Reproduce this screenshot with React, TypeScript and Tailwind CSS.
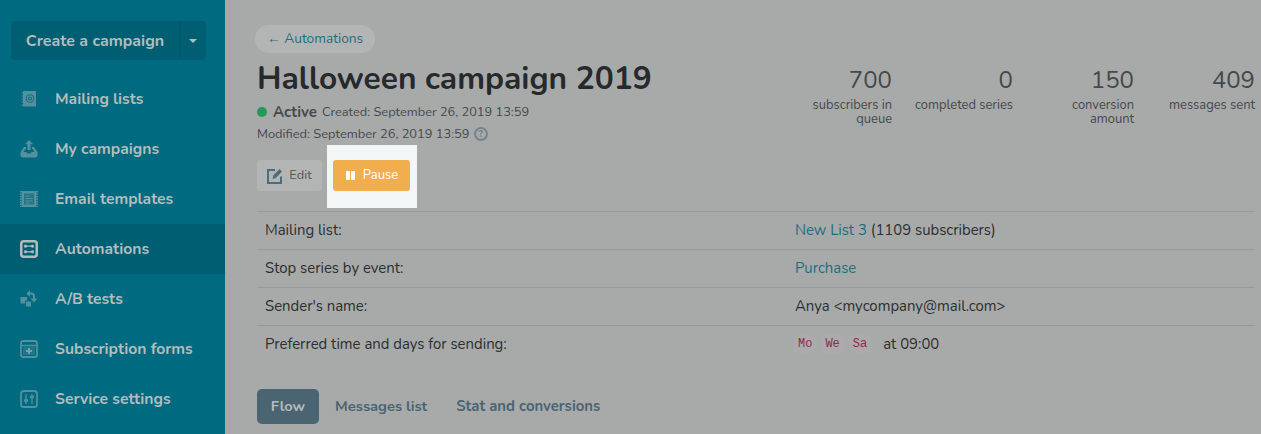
import React from 'react';

const font = "font-['Nunito','Noto_Sans',sans-serif]";
const iconColor = '#55909f';

function MailIcon() {
  return (
    <svg width="18" height="18" viewBox="0 0 18 18">
      <rect x="3" y="1" width="13" height="15.500" rx="0.500" fill={iconColor} />
      <path d="M1.500 3h3M1.500 6h3M1.500 9h3M1.500 12h3M1.500 15h3" stroke={iconColor} strokeWidth="1.200" />
      <circle cx="10" cy="8.500" r="3.800" fill="none" stroke="#156f82" strokeWidth="1.100" />
      <circle cx="10" cy="8.500" r="1.500" fill="none" stroke="#156f82" strokeWidth="1.100" />
    </svg>
  );
}

function UploadIcon() {
  return (
    <svg width="18" height="18" viewBox="0 0 18 18">
      <path fill={iconColor} d="M9 0l4.200 4.200h-2.700V10h-3V4.200H4.800z" />
      <path fill={iconColor} d="M4 7h2v2H5.200L3.500 12h3l1 1.500h3l1-1.500h3L12.800 9H12V7h2l3.500 5v3a2.500 2.500 0 0 1-2.500 2.500H3A2.500 2.500 0 0 1 .5 15v-3z" />
    </svg>
  );
}

function TemplateIcon() {
  return (
    <svg width="18" height="18" viewBox="0 0 18 18" fill="none">
      <rect x="1.500" y="1" width="15" height="16" fill={iconColor} />
      <path d="M.8 1v16M17.200 1v16" stroke={iconColor} strokeWidth="1.600" strokeDasharray="1.500 1" />
      <rect x="4" y="3.500" width="10" height="11" fill="#1f7788" />
      <path d="M5.500 6h4M5.500 8.500h7M5.500 11h7M5.500 13h4" stroke={iconColor} strokeWidth="1.200" />
    </svg>
  );
}

function AutoIcon() {
  return (
    <svg width="18" height="18" viewBox="0 0 18 18" fill="none" stroke="#b4bcbc">
      <rect x="1.250" y="1.250" width="15.500" height="15.500" rx="2.500" strokeWidth="2.500" />
      <path d="M4.500 6.200h9M4.500 11.800h9" strokeWidth="1.300" />
      <circle cx="5.500" cy="6.200" r="1.300" fill="#b4bcbc" strokeWidth="0.500" />
      <circle cx="12.500" cy="6.200" r="1.300" fill="#b4bcbc" strokeWidth="0.500" />
      <circle cx="5.500" cy="11.800" r="1.300" fill="#b4bcbc" strokeWidth="0.500" />
      <circle cx="12.500" cy="11.800" r="1.300" fill="#b4bcbc" strokeWidth="0.500" />
    </svg>
  );
}

function AbIcon() {
  return (
    <svg width="18" height="18" viewBox="0 0 18 18" fill="none">
      <rect x="0.500" y="7" width="6.500" height="6.500" fill={iconColor} />
      <rect x="5.500" y="11" width="6" height="6" fill={iconColor} stroke="#006a80" strokeWidth="1" />
      <path d="M7 3.500h4.500a2.500 2.500 0 0 1 2.500 2.500v3" stroke={iconColor} strokeWidth="2" />
      <path d="M10 0l-3.500 3.500L10 7zM10.500 8.500h7L14 12.500z" fill={iconColor} />
    </svg>
  );
}

function FormIcon() {
  return (
    <svg width="18" height="18" viewBox="0 0 18 18" fill="none">
      <rect x="1" y="1" width="16" height="16" rx="2" stroke={iconColor} strokeWidth="1.800" />
      <path d="M2 5.500h14" stroke={iconColor} strokeWidth="1.500" />
      <rect x="3" y="7" width="12" height="8" fill="#1f7788" />
      <path d="M9 8v6M6 11h6" stroke="#6ba3b0" strokeWidth="2" />
    </svg>
  );
}

function SettingsIcon() {
  return (
    <svg width="18" height="18" viewBox="0 0 18 18" fill="none">
      <rect x="1" y="1" width="16" height="16" rx="2.500" stroke={iconColor} strokeWidth="1.800" />
      <path d="M6 4v10M12 4v10" stroke={iconColor} strokeWidth="1.300" />
      <path d="M4 10.500h4M10 7h4" stroke={iconColor} strokeWidth="2.500" />
    </svg>
  );
}

const navItems = [
  { label: 'Mailing lists', Icon: MailIcon },
  { label: 'My campaigns', Icon: UploadIcon },
  { label: 'Email templates', Icon: TemplateIcon },
  { label: 'Automations', Icon: AutoIcon, active: true },
  { label: 'A/B tests', Icon: AbIcon },
  { label: 'Subscription forms', Icon: FormIcon },
  { label: 'Service settings', Icon: SettingsIcon },
];

const stats = [
  { value: '700', label: 'subscribers in queue' },
  { value: '0', label: 'completed series' },
  { value: '150', label: 'conversion amount' },
  { value: '409', label: 'messages sent' },
];

export default function App() {
  return (
    <div className={`${font} flex h-[434px] w-[1261px] overflow-hidden bg-[#a8aaa9] text-[#262a2c]`}>
      {/* Sidebar */}
      <aside className="w-[225px] shrink-0 bg-[#006a80] pt-[21px] text-[#b4bcbc]">
        <div className="mx-[11px] flex h-[39px] w-[195px] rounded-[4px] bg-[#005e72]">
          <div className="flex flex-1 items-center justify-center border-r border-[#00566a] text-[16px] font-bold">Create a campaign</div>
          <div className="flex w-[26px] items-center justify-center">
            <span className="h-0 w-0 border-x-[4px] border-t-[4px] border-x-transparent border-t-[#b4bcbc]" />
          </div>
        </div>
        <nav className="mt-[14px]">
          {navItems.map(({ label, Icon, active }) => (
            <div key={label} className={`flex h-[50px] items-center gap-[17px] pl-[20px] pr-2 text-[15.700px] font-bold ${active ? 'bg-[#005e72]' : ''}`}>
              <Icon />
              <span className="pt-[2px]">{label}</span>
            </div>
          ))}
        </nav>
      </aside>

      {/* Main */}
      <main className="min-w-0 flex-1 pl-[32px] pt-[25px]">
        <div className="ml-[-2px] inline-flex h-[28px] items-center rounded-full bg-[#b3b5b4] px-[12px] text-[13.700px] text-[#1c6f80]">← Automations</div>

        <div className="flex justify-between pr-[6px]">
          <div>
            <h1 className="mt-[6px] text-[31.700px] font-bold leading-[40px]">Halloween campaign 2019</h1>
            <div className="mt-[4px] flex items-center text-[12.800px] leading-[18px] text-[#44494c]">
              <span className="mr-[6px] h-[10px] w-[10px] rounded-full bg-[#23995a]" />
              <span className="mr-[5px] text-[15px] font-bold">Active</span>
              Created: September 26, 2019 13:59
            </div>
            <div className="mt-[4px] flex items-center text-[12.850px] leading-[18px] text-[#44494c]">
              Modified: September 26, 2019 13:59
              <span className="ml-[4px] flex h-[14px] w-[14px] items-center justify-center rounded-full border-2 border-[#75858b] text-[9px] font-extrabold leading-none text-[#75858b]">?</span>
            </div>
          </div>
          <div className="mt-[10px] flex gap-[21px]">
            {stats.map((s) => (
              <div key={s.value} className="w-[100px] text-right text-[#44494c]">
                <div className="text-[24px] leading-[34px]">{s.value}</div>
                <div className="mt-[1px] text-[12.900px] leading-[14px]">{s.label}</div>
              </div>
            ))}
          </div>
        </div>

        {/* Actions */}
        <div className="mt-[2px] flex items-start">
          <div className="mt-[15px] flex h-[31px] w-[65px] items-center justify-center gap-[6px] rounded-[3px] bg-[#b3b5b4] text-[12.800px] text-[#505558]">
            <svg width="16" height="16" viewBox="0 0 16 16" fill="none" stroke="#4f6b7b" strokeWidth="2">
              <path d="M14 8.500V15H1V2h7" />
              <path d="M5.500 11l.8-3.500L12.500 1 15 3.500 8.800 10z" fill="#4f6b7b" stroke="none" />
            </svg>
            Edit
          </div>
          <div className="ml-[5px] h-[63px] w-[90px] bg-[#f3f6f7] pl-[6px] pt-[15px]">
            <div className="flex h-[31px] w-[77px] items-center justify-center gap-[8px] rounded-[3px] bg-[#f1ae4d] pl-[1px] text-[13px] text-white">
              <span className="flex gap-[1px]">
                <span className="h-[9px] w-[4px] rounded-[1px] bg-white" />
                <span className="h-[9px] w-[4px] rounded-[1px] bg-white" />
              </span>
              Pause
            </div>
          </div>
        </div>

        {/* Details */}
        <div className="mr-[6px] mt-[3px] text-[14.900px] text-[#2b2f31]">
          {[
            ['Mailing list:', <><span className="text-[#1c6f80]">New List 3</span> (1109 subscribers)</>],
            ['Stop series by event:', <span className="text-[#1c6f80]">Purchase</span>],
            ["Sender's name:", 'Anya <mycompany@mail.com>'],
            ['Preferred time and days for sending:', (
              <span className="flex items-center">
                {['Mo', 'We', 'Sa'].map((d) => (
                  <span key={d} className="mr-[7px] rounded-[2px] bg-[#acaaab] px-[3px] font-['Liberation_Mono',monospace] text-[12px] text-[#8e2a4e]">{d}</span>
                ))}
                <span className="ml-[6px]">at 09:00</span>
              </span>
            )],
          ].map(([k, v], i) => (
            <div key={i} className="flex h-[38px] items-center border-t border-[#959a9a]">
              <div className="w-[538px] pl-[8px]">{k}</div>
              <div>{v}</div>
            </div>
          ))}
        </div>

        {/* Tabs */}
        <div className="mt-[26px] flex items-center text-[14.700px] font-bold leading-[18px] text-[#4a6472]">
          <div className="flex h-[35px] w-[62px] items-center justify-center rounded-[5px] bg-[#4a6472] pb-[2px] text-[#b6baba]">Flow</div>
          <div className="ml-[16px] pb-[2px]">Messages list</div>
          <div className="ml-[29px] pb-[2px] text-[14.900px]">Stat and conversions</div>
        </div>
      </main>
    </div>
  );
}
